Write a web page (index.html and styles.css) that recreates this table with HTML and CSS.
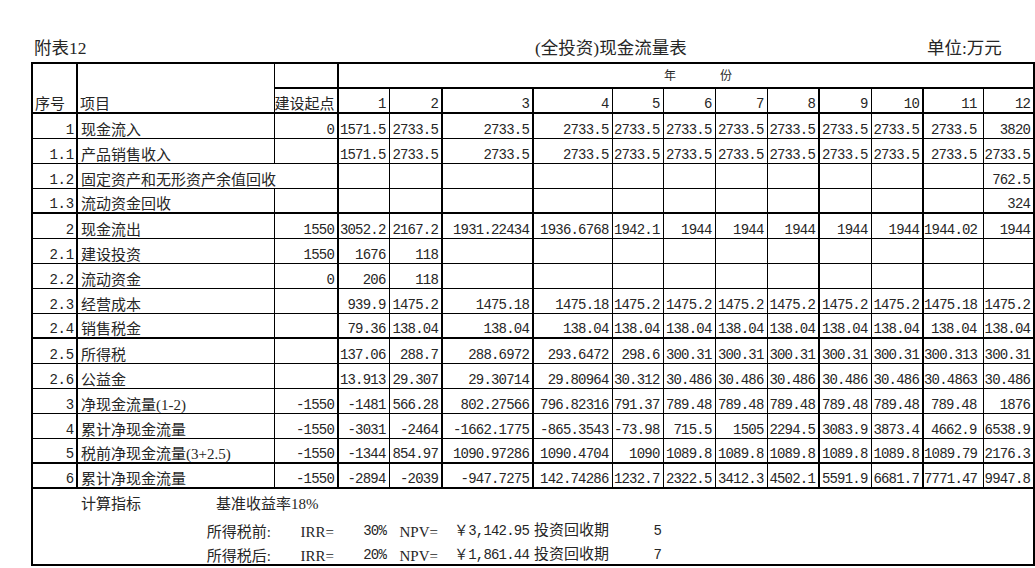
FILE: index.html
```html
<!DOCTYPE html>
<html lang="zh-CN">
<head>
<meta charset="utf-8">
<title>(全投资)现金流量表</title>
<link rel="stylesheet" href="styles.css">
</head>
<body>
<div class="sheet">
  <div class="title">
    <span>附表12</span>
    <span>(全投资)现金流量表</span>
    <span>单位:万元</span>
  </div>
  <table class="cf">
    <colgroup>
      <col class="w-a"><col class="w-b"><col class="w-c">
      <col class="w-1"><col class="w-2"><col class="w-3"><col class="w-4">
      <col class="w-5"><col class="w-6"><col class="w-6"><col class="w-6">
      <col class="w-6"><col class="w-6"><col class="w-11"><col class="w-12">
    </colgroup>
    <tr class="h1">
      <td class="t k tb2" rowspan="2">序号</td>
      <td class="t tb2" rowspan="2">项目</td>
      <td class="k tb2"></td>
      <td class="yr tb2 k" colspan="12"><span>年</span><span class="gap"></span><span>份</span></td>
    </tr>
    <tr class="h2 tb">
      <td class="t r k">建设起点</td>
      <td>1</td><td class="k">2</td><td class="k">3</td><td>4</td><td>5</td><td>6</td><td>7</td><td class="k">8</td><td>9</td><td class="k">10</td><td class="p11">11</td><td class="k">12</td>
    </tr>
    <tr class="d">
      <td>1</td><td>现金流入</td><td>0</td><td>1571.5</td><td>2733.5</td><td>2733.5</td><td>2733.5</td><td>2733.5</td><td>2733.5</td><td>2733.5</td><td>2733.5</td><td>2733.5</td><td>2733.5</td><td>2733.5</td><td>3820</td>
    </tr>
    <tr class="d">
      <td>1.1</td><td>产品销售收入</td><td></td><td>1571.5</td><td>2733.5</td><td>2733.5</td><td>2733.5</td><td>2733.5</td><td>2733.5</td><td>2733.5</td><td>2733.5</td><td>2733.5</td><td>2733.5</td><td>2733.5</td><td>2733.5</td>
    </tr>
    <tr class="d2">
      <td class="k">1.2</td><td class="t k" colspan="2">固定资产和无形资产余值回收</td><td></td><td class="k"></td><td class="k"></td><td></td><td></td><td></td><td></td><td class="k"></td><td></td><td class="k"></td><td class="p11"></td><td class="k">762.5</td>
    </tr>
    <tr class="d tb">
      <td>1.3</td><td>流动资金回收</td><td></td><td></td><td></td><td></td><td></td><td></td><td></td><td></td><td></td><td></td><td></td><td></td><td>324</td>
    </tr>
    <tr class="d">
      <td>2</td><td>现金流出</td><td>1550</td><td>3052.2</td><td>2167.2</td><td>1931.22434</td><td>1936.6768</td><td>1942.1</td><td>1944</td><td>1944</td><td>1944</td><td>1944</td><td>1944</td><td>1944.02</td><td>1944</td>
    </tr>
    <tr class="d">
      <td>2.1</td><td>建设投资</td><td>1550</td><td>1676</td><td>118</td><td></td><td></td><td></td><td></td><td></td><td></td><td></td><td></td><td></td><td></td>
    </tr>
    <tr class="d">
      <td>2.2</td><td>流动资金</td><td>0</td><td>206</td><td>118</td><td></td><td></td><td></td><td></td><td></td><td></td><td></td><td></td><td></td><td></td>
    </tr>
    <tr class="d">
      <td>2.3</td><td>经营成本</td><td></td><td>939.9</td><td>1475.2</td><td>1475.18</td><td>1475.18</td><td>1475.2</td><td>1475.2</td><td>1475.2</td><td>1475.2</td><td>1475.2</td><td>1475.2</td><td>1475.18</td><td>1475.2</td>
    </tr>
    <tr class="d tb">
      <td>2.4</td><td>销售税金</td><td></td><td>79.36</td><td>138.04</td><td>138.04</td><td>138.04</td><td>138.04</td><td>138.04</td><td>138.04</td><td>138.04</td><td>138.04</td><td>138.04</td><td>138.04</td><td>138.04</td>
    </tr>
    <tr class="d">
      <td>2.5</td><td>所得税</td><td></td><td>137.06</td><td>288.7</td><td>288.6972</td><td>293.6472</td><td>298.6</td><td>300.31</td><td>300.31</td><td>300.31</td><td>300.31</td><td>300.31</td><td>300.313</td><td>300.31</td>
    </tr>
    <tr class="d">
      <td>2.6</td><td>公益金</td><td></td><td>13.913</td><td>29.307</td><td>29.30714</td><td>29.80964</td><td>30.312</td><td>30.486</td><td>30.486</td><td>30.486</td><td>30.486</td><td>30.486</td><td>30.4863</td><td>30.486</td>
    </tr>
    <tr class="d">
      <td>3</td><td>净现金流量(1-2)</td><td>-1550</td><td>-1481</td><td>566.28</td><td>802.27566</td><td>796.82316</td><td>791.37</td><td>789.48</td><td>789.48</td><td>789.48</td><td>789.48</td><td>789.48</td><td>789.48</td><td>1876</td>
    </tr>
    <tr class="d">
      <td>4</td><td>累计净现金流量</td><td>-1550</td><td>-3031</td><td>-2464</td><td>-1662.1775</td><td>-865.3543</td><td>-73.98</td><td>715.5</td><td>1505</td><td>2294.5</td><td>3083.9</td><td>3873.4</td><td>4662.9</td><td>6538.9</td>
    </tr>
    <tr class="d tb">
      <td>5</td><td>税前净现金流量(3+2.5)</td><td>-1550</td><td>-1344</td><td>854.97</td><td>1090.97286</td><td>1090.4704</td><td>1090</td><td>1089.8</td><td>1089.8</td><td>1089.8</td><td>1089.8</td><td>1089.8</td><td>1089.79</td><td>2176.3</td>
    </tr>
    <tr class="d tb">
      <td>6</td><td>累计净现金流量</td><td>-1550</td><td>-2894</td><td>-2039</td><td>-947.7275</td><td>142.74286</td><td>1232.7</td><td>2322.5</td><td>3412.3</td><td>4502.1</td><td>5591.9</td><td>6681.7</td><td>7771.47</td><td>9947.8</td>
    </tr>
    <tr class="f f1">
      <td></td>
      <td class="t" colspan="2">计算指标<span class="rate">基准收益率18%</span></td>
      <td colspan="12"></td>
    </tr>
    <tr class="f">
      <td></td>
      <td class="t r">所得税前:</td>
      <td class="t r lat">IRR=</td>
      <td>30%</td>
      <td class="t r lat">NPV=</td>
      <td class="cur"><span class="yen">￥</span>3,142.95</td>
      <td class="t pl">投资回收期</td>
      <td class="pb">5</td>
      <td colspan="7"></td>
    </tr>
    <tr class="f f3">
      <td></td>
      <td class="t r">所得税后:</td>
      <td class="t r lat">IRR=</td>
      <td>20%</td>
      <td class="t r lat">NPV=</td>
      <td class="cur"><span class="yen">￥</span>1,861.44</td>
      <td class="t pl">投资回收期</td>
      <td class="pb">7</td>
      <td colspan="7"></td>
    </tr>
  </table>
</div>
</body>
</html>
```

FILE: styles.css
```css
html, body {
  margin: 0;
  padding: 0;
  background: #ffffff;
}
body {
  width: 1035px;
  height: 568px;
  overflow: hidden;
  color: #262626;
  font-family: "Liberation Serif", "Noto Sans CJK SC", serif;
}
.sheet {
  padding-left: 31px;
}
.title {
  height: 62px;
  box-sizing: border-box;
  padding: 0 0 3px 3px;
  display: grid;
  grid-template-columns: 501px 392px auto;
  align-items: end;
  font-size: 17.5px;
  line-height: 22px;
  white-space: nowrap;
}

/* grid columns */
.w-a { width: 45px; }
.w-b { width: 197px; }
.w-c { width: 64px; }
.w-1 { width: 51px; }
.w-2 { width: 53px; }
.w-3 { width: 91px; }
.w-4 { width: 79px; }
.w-5 { width: 51px; }
.w-6 { width: 52px; }
.w-11 { width: 60px; }
.w-12 { width: 51px; }

.cf {
  border-collapse: collapse;
  table-layout: fixed;
  width: 1002px;
  border: 2px solid #000;
}
.cf tr {
  height: 25px;
}
.cf td {
  border: 1px solid #000;
  padding: 0 3px 1px 0;
  vertical-align: bottom;
  white-space: nowrap;
  overflow: visible;
  text-align: right;
  font-family: "Liberation Mono", "Noto Sans CJK SC", monospace;
  font-size: 14px;
  letter-spacing: -0.8px;
  line-height: 13px;
}

/* text cells */
.cf td.t,
.cf tr.d td:nth-child(2) {
  font-family: "Liberation Serif", "Noto Sans CJK SC", serif;
  font-size: 15px;
  letter-spacing: 0;
  line-height: 16px;
  text-align: left;
  padding: 0 0 0 3px;
}
.cf td.t.r {
  text-align: right;
  padding: 0 3px 0 0;
}
.cf tr.h1 td.t {
  padding-left: 2px;
}

/* sequence column */
.cf tr.d td:nth-child(1),
.cf tr.d2 td:nth-child(1) {
  letter-spacing: -0.2px;
  padding-right: 2px;
}

/* thick rules */
.cf td.k,
.cf tr.d td:nth-child(1),
.cf tr.d td:nth-child(3),
.cf tr.d td:nth-child(5),
.cf tr.d td:nth-child(6),
.cf tr.d td:nth-child(11),
.cf tr.d td:nth-child(13),
.cf tr.d td:nth-child(15) {
  border-right-width: 2px;
}
.cf tr.tb td,
.cf td.tb2 {
  border-bottom-width: 2px;
}

/* column 11 has a wider right gutter */
.cf tr.d td:nth-child(14),
.cf td.p11 {
  padding-right: 6px;
}

/* year header */
.cf td.yr {
  vertical-align: middle;
  text-align: left;
  padding: 0 0 2px 325px;
  font-family: "Noto Sans CJK SC", sans-serif;
  font-size: 12px;
  letter-spacing: 0;
  line-height: 14px;
}
.yr .gap {
  display: inline-block;
  width: 44px;
}

/* footer block */
.cf tr.f td {
  border: none;
  padding-bottom: 2px;
}
.cf tr.f {
  height: 26px;
}
.cf tr.f3 {
  height: 25px;
}
.cf tr.f td.t {
  padding-left: 4px;
}
.cf tr.f td.t.r {
  padding-left: 0;
  padding-right: 3px;
}
.cf tr.f td.t.lat {
  padding-right: 4px;
}
.rate {
  margin-left: 75px;
}
.cf tr.f td.cur {
  padding-right: 4px;
}
.yen {
  font-family: "Noto Sans CJK SC", sans-serif;
  letter-spacing: 0;
  font-size: 14px;
}
.cf tr.f td.pb {
  padding-right: 2px;
}
.cf tr.f td.t.pl {
  padding-left: 1px;
}
```
